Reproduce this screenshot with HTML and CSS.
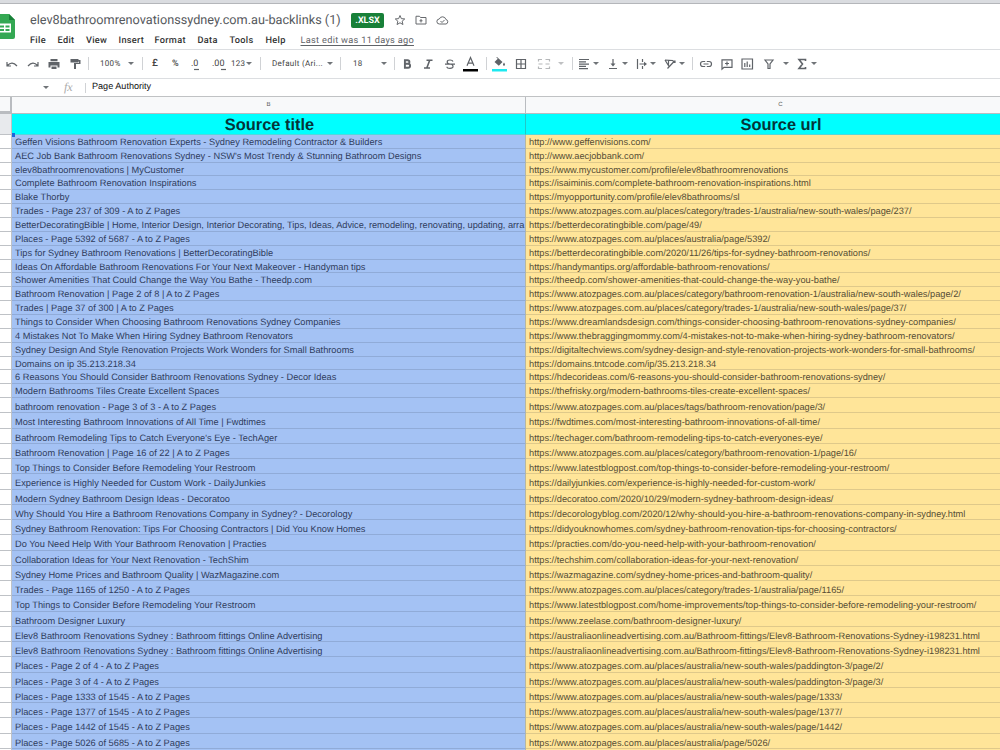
FILE: index.html
```html
<!DOCTYPE html>
<html lang="en">
<head>
<meta charset="utf-8">
<title>elev8bathroomrenovationssydney.com.au-backlinks (1)</title>
<link rel="stylesheet" href="styles.css">
</head>
<body>
<div class="app">
<div class="topbar"></div>
<header class="header">
  <svg class="logo" width="15" height="27" viewBox="0 0 15 27"><path d="M-4 2q0-2 2-2H9l6 6v17q0 2-2 2H-4z" fill="#34a853"/><path d="M9 0l6 6H9z" fill="#188038"/><path d="M-3 9.500h14v9h-14z" fill="#fff"/><path d="M-1 11.500h5v2h-5zM5.500 11.500h4v2h-4zM-1 15h5v2h-5zM5.500 15h4v2h-4z" fill="#34a853"/></svg>
  <div class="head-main">
    <div class="title-line">
      <span class="doc-title">elev8bathroomrenovationssydney.com.au-backlinks (1)</span>
      <span class="badge">.XLSX</span>
      <svg class="ticon" width="12" height="12" viewBox="0 0 24 24"><path d="M12 3l2.700 6.300 6.800.6-5.200 4.500 1.600 6.700L12 17.500l-5.900 3.600 1.600-6.700L2.500 9.900l6.800-.6z"/></svg>
      <svg class="ticon" width="12" height="12" viewBox="0 0 24 24"><path d="M2 4.500h7l2 2.500h11v13H2zM12 10v7M9 13.500h6"/></svg>
      <svg class="ticon" width="13" height="12" viewBox="0 0 26 24"><path d="M7 20a5 5 0 0 1-.5-10 7 7 0 0 1 13.300 1A4.600 4.600 0 0 1 20 20zM9 14l3 3 5-5"/></svg>
    </div>
    <nav class="menu"><span class="m1">File</span><span class="m2">Edit</span><span class="m3">View</span><span class="m4">Insert</span><span class="m5">Format</span><span class="m6">Data</span><span class="m7">Tools</span><span class="m8">Help</span><span class="last-edit">Last edit was 11 days ago</span></nav>
  </div>
</header>
<div class="toolbar">
  <svg class="ic" viewBox="0 0 14 14"><path class="s" d="M2 5v4h4M2.500 8.500Q7 3.500 12 9"/></svg>
  <svg class="ic" viewBox="0 0 14 14"><path class="s" d="M12 5v4H8M11.500 8.500Q7 3.500 2 9"/></svg>
  <svg class="ic" viewBox="0 0 14 14"><path d="M3.500 2h7v2.200h-7zM1.500 5h11v5.500h-2V8.500h-7v2h-2zM4.500 9.500h5V12h-5z"/></svg>
  <svg class="ic" viewBox="0 0 14 14"><path d="M2.500 2h8v1h2v4H8v5H6V6h5V4.500h-.5v1h-8z"/></svg>
  <i class="sep"></i>
  <span class="tx">100%</span><i class="arr"></i>
  <i class="sep"></i>
  <span class="tx big">£</span><span class="tx pct">%</span>
  <span class="tx dec">.0<svg width="5" height="3" viewBox="0 0 5 3"><path class="s" d="M0 1.500h5"/></svg></span>
  <span class="tx dec">.00<svg width="5" height="3" viewBox="0 0 5 3"><path class="s" d="M0 1.500h5"/></svg></span>
  <span class="tx">123</span><i class="arr"></i>
  <i class="sep"></i>
  <span class="tx">Default (Ari...</span><i class="arr"></i>
  <i class="sep"></i>
  <span class="tx">18</span><i class="arr"></i>
  <i class="sep"></i>
  <svg class="ic" viewBox="0 0 14 14"><path class="h" d="M4.900 3.200h2.700a1.800 1.800 0 0 1 0 3.600H4.900zM4.900 6.800h3.200a2 2 0 0 1 0 4H4.900z"/></svg>
  <svg class="ic" viewBox="0 0 14 14"><path class="w" d="M5.500 3.200h6M3 11h6M8.700 3.200L5.800 11"/></svg>
  <svg class="ic" viewBox="0 0 14 14"><path class="s" d="M10 4.500Q9.500 3 7 3 4.200 3 4.200 5T7 7t3 2.200T7 11.400 4 9.800M2 7.200h10"/></svg>
  <svg class="ic color" viewBox="0 0 15 16"><path class="s" d="M4 9.800L7.500 1.500 11 9.800M5.200 7.200h4.600"/><path d="M0 13h15v2.500H0z" fill="#000"/></svg>
  <i class="sep"></i>
  <svg class="ic color" viewBox="0 0 15 16"><path d="M5 1l5.500 5L6.800 9.800 2.500 6l3.300-3.200L4.300 1.500zM12 6.500q2 3 0 3.200-2-.2 0-3.200z"/><path d="M0 13h15v2.500H0z" fill="#1de9f0"/></svg>
  <svg class="ic" viewBox="0 0 14 14"><path class="s" d="M2.500 2.500h9v9h-9zM7 2.500v9M2.500 7h9"/></svg>
  <svg class="ic pale" viewBox="0 0 14 14"><path class="s" d="M1.500 4.500V2.500H5M8.500 2.500h4v2M1.500 9.500v2H5M8.500 11.500h4v-2M1.500 7H5.500M8.500 7h4"/></svg>
  <i class="arr pale"></i>
  <i class="sep"></i>
  <svg class="ic" viewBox="0 0 14 14"><path class="s" d="M2 2.500h10M2 4.800h7M2 7.100h10M2 9.400h7M2 11.700h9"/></svg><i class="arr"></i>
  <svg class="ic" viewBox="0 0 14 14"><path class="s" d="M3 11.500h8M7 2v6"/><path d="M4.500 6.500h5L7 9.500z"/></svg><i class="arr"></i>
  <svg class="ic" viewBox="0 0 14 14"><path class="s" d="M2.500 2v10M7.500 2v3M7.500 9v3M4.500 7h5"/><path d="M9 4.800L12 7 9 9.200z"/></svg><i class="arr"></i>
  <svg class="ic" viewBox="0 0 14 14"><path class="s" d="M2 3l8 .5M2 3l4 6.500M5.500 8V3.500M4.500 11.500L11.500 4M9.500 4h2.500v2"/></svg><i class="arr"></i>
  <i class="sep"></i>
  <svg class="ic" viewBox="0 0 14 14"><path class="s" d="M6.200 4.500H4a2.500 2.500 0 0 0 0 5h2.200M7.800 4.500H10a2.500 2.500 0 0 1 0 5H7.800M4.500 7h5"/></svg>
  <svg class="ic" viewBox="0 0 14 14"><path class="s" d="M2 2.800h10v7.500H4L2 12.200zM7 4.500v4M5 6.500h4"/></svg>
  <svg class="ic" viewBox="0 0 14 14"><path class="s" d="M2 2h10.500v10H2zM4.800 6v4M7.200 4.500V10M9.700 7.500V10"/></svg>
  <svg class="ic" viewBox="0 0 14 14"><path class="s" d="M3 3h8L8 7v4.500H6V7z"/></svg><i class="arr"></i>
  <svg class="ic" viewBox="0 0 14 14"><path class="w" d="M10.500 4V2.500H4L7.500 7 4 11.500h6.500V10"/></svg><i class="arr"></i>
</div>
<div class="formula"><i class="arr"></i><span class="fx">fx</span><i class="sep"></i><span class="fval">Page Authority</span></div>
<div class="cols"><div class="corner"></div><div class="cb">B</div><div class="cc">C</div></div>
<div class="row hrow"><div class="n"></div><div class="b">Source title</div><div class="c">Source url</div><i class="handle"></i></div>
<div class="rows">
<div class="row"><div class="n"></div><div class="b">Geffen Visions Bathroom Renovation Experts - Sydney Remodeling Contractor &amp; Builders</div><div class="c">http://www.geffenvisions.com/</div></div>
<div class="row"><div class="n"></div><div class="b">AEC Job Bank Bathroom Renovations Sydney - NSW's Most Trendy &amp; Stunning Bathroom Designs</div><div class="c">http://www.aecjobbank.com/</div></div>
<div class="row"><div class="n"></div><div class="b">elev8bathroomrenovations | MyCustomer</div><div class="c">https://www.mycustomer.com/profile/elev8bathroomrenovations</div></div>
<div class="row"><div class="n"></div><div class="b">Complete Bathroom Renovation Inspirations</div><div class="c">https://isaiminis.com/complete-bathroom-renovation-inspirations.html</div></div>
<div class="row"><div class="n"></div><div class="b">Blake Thorby</div><div class="c">https://myopportunity.com/profile/elev8bathrooms/sl</div></div>
<div class="row"><div class="n"></div><div class="b">Trades - Page 237 of 309 - A to Z Pages</div><div class="c">https://www.atozpages.com.au/places/category/trades-1/australia/new-south-wales/page/237/</div></div>
<div class="row"><div class="n"></div><div class="b full">BetterDecoratingBible | Home, Interior Design, Interior Decorating, Tips, Ideas, Advice, remodeling, renovating, updating, arra</div><div class="c">https://betterdecoratingbible.com/page/49/</div></div>
<div class="row"><div class="n"></div><div class="b">Places - Page 5392 of 5687 - A to Z Pages</div><div class="c">https://www.atozpages.com.au/places/australia/page/5392/</div></div>
<div class="row"><div class="n"></div><div class="b">Tips for Sydney Bathroom Renovations | BetterDecoratingBible</div><div class="c">https://betterdecoratingbible.com/2020/11/26/tips-for-sydney-bathroom-renovations/</div></div>
<div class="row"><div class="n"></div><div class="b">Ideas On Affordable Bathroom Renovations For Your Next Makeover - Handyman tips</div><div class="c">https://handymantips.org/affordable-bathroom-renovations/</div></div>
<div class="row"><div class="n"></div><div class="b">Shower Amenities That Could Change the Way You Bathe - Theedp.com</div><div class="c">https://theedp.com/shower-amenities-that-could-change-the-way-you-bathe/</div></div>
<div class="row"><div class="n"></div><div class="b">Bathroom Renovation | Page 2 of 8 | A to Z Pages</div><div class="c">https://www.atozpages.com.au/places/category/bathroom-renovation-1/australia/new-south-wales/page/2/</div></div>
<div class="row"><div class="n"></div><div class="b">Trades | Page 37 of 300 | A to Z Pages</div><div class="c">https://www.atozpages.com.au/places/category/trades-1/australia/new-south-wales/page/37/</div></div>
<div class="row"><div class="n"></div><div class="b">Things to Consider When Choosing Bathroom Renovations Sydney Companies</div><div class="c">https://www.dreamlandsdesign.com/things-consider-choosing-bathroom-renovations-sydney-companies/</div></div>
<div class="row"><div class="n"></div><div class="b">4 Mistakes Not To Make When Hiring Sydney Bathroom Renovators</div><div class="c">https://www.thebraggingmommy.com/4-mistakes-not-to-make-when-hiring-sydney-bathroom-renovators/</div></div>
<div class="row"><div class="n"></div><div class="b">Sydney Design And Style Renovation Projects Work Wonders for Small Bathrooms</div><div class="c">https://digitaltechviews.com/sydney-design-and-style-renovation-projects-work-wonders-for-small-bathrooms/</div></div>
<div class="row"><div class="n"></div><div class="b">Domains on ip 35.213.218.34</div><div class="c">https://domains.tntcode.com/ip/35.213.218.34</div></div>
<div class="row"><div class="n"></div><div class="b">6 Reasons You Should Consider Bathroom Renovations Sydney - Decor Ideas</div><div class="c">https://hdecorideas.com/6-reasons-you-should-consider-bathroom-renovations-sydney/</div></div>
<div class="row"><div class="n"></div><div class="b">Modern Bathrooms Tiles Create Excellent Spaces</div><div class="c">https://thefrisky.org/modern-bathrooms-tiles-create-excellent-spaces/</div></div>
</div>
<div class="rows tall">
<div class="row"><div class="n"></div><div class="b">bathroom renovation - Page 3 of 3 - A to Z Pages</div><div class="c">https://www.atozpages.com.au/places/tags/bathroom-renovation/page/3/</div></div>
<div class="row"><div class="n"></div><div class="b">Most Interesting Bathroom Innovations of All Time | Fwdtimes</div><div class="c">https://fwdtimes.com/most-interesting-bathroom-innovations-of-all-time/</div></div>
<div class="row"><div class="n"></div><div class="b">Bathroom Remodeling Tips to Catch Everyone's Eye - TechAger</div><div class="c">https://techager.com/bathroom-remodeling-tips-to-catch-everyones-eye/</div></div>
<div class="row"><div class="n"></div><div class="b">Bathroom Renovation | Page 16 of 22 | A to Z Pages</div><div class="c">https://www.atozpages.com.au/places/category/bathroom-renovation-1/page/16/</div></div>
<div class="row"><div class="n"></div><div class="b">Top Things to Consider Before Remodeling Your Restroom</div><div class="c">https://www.latestblogpost.com/top-things-to-consider-before-remodeling-your-restroom/</div></div>
<div class="row"><div class="n"></div><div class="b">Experience is Highly Needed for Custom Work - DailyJunkies</div><div class="c">https://dailyjunkies.com/experience-is-highly-needed-for-custom-work/</div></div>
<div class="row"><div class="n"></div><div class="b">Modern Sydney Bathroom Design Ideas - Decoratoo</div><div class="c">https://decoratoo.com/2020/10/29/modern-sydney-bathroom-design-ideas/</div></div>
<div class="row"><div class="n"></div><div class="b">Why Should You Hire a Bathroom Renovations Company in Sydney? - Decorology</div><div class="c">https://decorologyblog.com/2020/12/why-should-you-hire-a-bathroom-renovations-company-in-sydney.html</div></div>
<div class="row"><div class="n"></div><div class="b">Sydney Bathroom Renovation: Tips For Choosing Contractors | Did You Know Homes</div><div class="c">https://didyouknowhomes.com/sydney-bathroom-renovation-tips-for-choosing-contractors/</div></div>
<div class="row"><div class="n"></div><div class="b">Do You Need Help With Your Bathroom Renovation | Practies</div><div class="c">https://practies.com/do-you-need-help-with-your-bathroom-renovation/</div></div>
<div class="row"><div class="n"></div><div class="b">Collaboration Ideas for Your Next Renovation - TechShim</div><div class="c">https://techshim.com/collaboration-ideas-for-your-next-renovation/</div></div>
<div class="row"><div class="n"></div><div class="b">Sydney Home Prices and Bathroom Quality | WazMagazine.com</div><div class="c">https://wazmagazine.com/sydney-home-prices-and-bathroom-quality/</div></div>
<div class="row"><div class="n"></div><div class="b">Trades - Page 1165 of 1250 - A to Z Pages</div><div class="c">https://www.atozpages.com.au/places/category/trades-1/australia/page/1165/</div></div>
<div class="row"><div class="n"></div><div class="b">Top Things to Consider Before Remodeling Your Restroom</div><div class="c">https://www.latestblogpost.com/home-improvements/top-things-to-consider-before-remodeling-your-restroom/</div></div>
<div class="row"><div class="n"></div><div class="b">Bathroom Designer Luxury</div><div class="c">https://www.zeelase.com/bathroom-designer-luxury/</div></div>
<div class="row"><div class="n"></div><div class="b">Elev8 Bathroom Renovations Sydney : Bathroom fittings Online Advertising</div><div class="c">https://australiaonlineadvertising.com.au/Bathroom-fittings/Elev8-Bathroom-Renovations-Sydney-i198231.html</div></div>
<div class="row"><div class="n"></div><div class="b">Elev8 Bathroom Renovations Sydney : Bathroom fittings Online Advertising</div><div class="c">https://australiaonlineadvertising.com.au/Bathroom-fittings/Elev8-Bathroom-Renovations-Sydney-i198231.html</div></div>
<div class="row"><div class="n"></div><div class="b">Places - Page 2 of 4 - A to Z Pages</div><div class="c">https://www.atozpages.com.au/places/australia/new-south-wales/paddington-3/page/2/</div></div>
<div class="row"><div class="n"></div><div class="b">Places - Page 3 of 4 - A to Z Pages</div><div class="c">https://www.atozpages.com.au/places/australia/new-south-wales/paddington-3/page/3/</div></div>
<div class="row"><div class="n"></div><div class="b">Places - Page 1333 of 1545 - A to Z Pages</div><div class="c">https://www.atozpages.com.au/places/australia/new-south-wales/page/1333/</div></div>
<div class="row"><div class="n"></div><div class="b">Places - Page 1377 of 1545 - A to Z Pages</div><div class="c">https://www.atozpages.com.au/places/australia/new-south-wales/page/1377/</div></div>
<div class="row"><div class="n"></div><div class="b">Places - Page 1442 of 1545 - A to Z Pages</div><div class="c">https://www.atozpages.com.au/places/australia/new-south-wales/page/1442/</div></div>
<div class="row"><div class="n"></div><div class="b">Places - Page 5026 of 5685 - A to Z Pages</div><div class="c">https://www.atozpages.com.au/places/australia/page/5026/</div></div>
<div class="row"><div class="n"></div><div class="b"></div><div class="c"></div></div>
</div>
</div>
</body>
</html>
```
FILE: styles.css
```css
* { box-sizing: border-box; }
body { margin: 0; background: #fff; font-family: "Liberation Sans", Arial, sans-serif; text-rendering: geometricPrecision; }
.app { width: 1000px; height: 750px; overflow: hidden; }
.topbar { height: 4px; background: #dadce0; border-bottom: 1px solid #b4b6ba; }
.header { height: 46px; border-bottom: 1px solid #dcdee1; display: flex; }
.logo { margin-top: 10px; flex: none; }
.head-main { padding-left: 15px; }
.title-line { display: flex; align-items: center; height: 18px; margin-top: 7px; }
.doc-title { font-family: Roboto, sans-serif; font-size: 12.7px; color: #55585c; white-space: nowrap; width: 310px; }
.badge { margin-left: 11px; width: 33px; height: 15px; border-radius: 2px; background: #188038; color: #fff; font: bold 9px/16px Roboto, sans-serif; text-align: center; margin-right: 10px; }
.ticon { margin-right: 9px; fill: none; stroke: #66696d; stroke-width: 2; }
.menu { display: flex; font: 500 9.2px/14px Roboto, sans-serif; letter-spacing: .3px; color: #333; margin-top: 5px; white-space: nowrap; }
.m1 { width: 27.5px; } .m2 { width: 28.5px; } .m3 { width: 32.5px; } .m4 { width: 36px; } .m5 { width: 43px; } .m6 { width: 32px; } .m7 { width: 36px; } .m8 { width: 35px; }
.last-edit { text-decoration: underline; text-underline-offset: 2px; font-weight: 400; color: #5f6368; }
.toolbar { height: 29px; border-bottom: 1px solid #dcdee1; padding: 0 0 1px 5px; display: grid; align-items: center; justify-items: start; grid-template-columns: 21px 21px 21px 20px 12px 28px 14px 10px 20px 19px 21px 19px 15px 14px 12px 55px 13px 13px 28px 13px 6px 21px 22px 20px 23px 6px 22px 23px 21px 14px 5px 16px 13px 16px 13px 15px 13px 16px 13px 7px 21px 20px 22px 21px 12px 16px 14px; }
.ic { width: 14px; height: 14px; fill: #5f6368; }
.ic.color { width: 15px; height: 16px; margin-top: 1px; }
.s, .w, .h { fill: none; stroke: #5f6368; stroke-width: 1.2; }
.w { stroke-width: 1.6; }
.h { stroke-width: 1.9; }
.pale { opacity: .45; }
.sep { width: 1px; height: 13px; background: #d0d2d5; }
.arr { width: 6px; height: 3px; background: #707478; clip-path: polygon(0 0, 100% 0, 50% 100%); }
.tx { font: 8px/14px Roboto, sans-serif; letter-spacing: .3px; color: #444; white-space: nowrap; }
.big { font-size: 10px; font-weight: 500; }
.pct { font-size: 9px; font-weight: 500; }
.dec { font-size: 9px; display: flex; letter-spacing: 0; }
.dec svg { margin: 11px 0 0 -4px; }
.formula { height: 18px; border-bottom: 1px solid #c0c2c4; display: flex; align-items: center; padding-left: 43px; }
.fx { font: italic 12px/14px "Liberation Serif", serif; color: #aaa; margin: -1px 0 0 15px; width: 21px; }
.formula .sep { height: 10px; }
.fval { font-size: 9.1px; line-height: 12px; color: #111; margin: -3px 0 0 6px; }
.cols { height: 17px; display: grid; grid-template-columns: 12px 514px 1fr; background: #f8f9fa; border-bottom: 1px solid #b9bcc0; font-size: 6px; line-height: 16px; color: #555; text-align: center; }
.corner { border-right: 2px solid #b9bcc0; border-bottom: 2px solid #b9bcc0; }
.cb { border-right: 1px solid #b9bcc0; }
.cc { width: 509px; }
.row { display: grid; grid-template-columns: 12px 514px 474px; height: 13.87px; font-size: 9.25px; line-height: 15.6px; white-space: nowrap; position: relative; }
.tall .row { height: 15.26px; line-height: 18.5px; }
.n { background: #fff; border-bottom: 1px solid #bfc2c6; border-right: 1px solid #bfc2c6; }
.row .b { background: #a4c2f4; border-bottom: 1px solid #90abd8; border-right: 1px solid #b7b79f; padding-left: 3px; color: #2f3c5c; overflow: hidden; }
.row .full { letter-spacing: -.025px; }
.row .c { background: #ffe599; border-bottom: 1px solid #dfc98a; padding-left: 3px; color: #564d35; overflow: hidden; }
.row.hrow { height: 20.8px; font-size: 16.4px; line-height: 23px; font-weight: bold; text-align: center; }
.hrow .n { background: #e8eaed; }
.row.hrow .b, .row.hrow .c { background: #0ff; color: #043438; padding: 0; border-bottom-color: #50d9dd; }
.row.hrow .b { border-right-color: #20c8c8; padding-left: 2px; }
.row.hrow .c { padding-left: 36px; }
.handle { position: absolute; left: 12px; bottom: -2px; width: 3px; height: 4px; background: #1a66d9; z-index: 2; }
```
